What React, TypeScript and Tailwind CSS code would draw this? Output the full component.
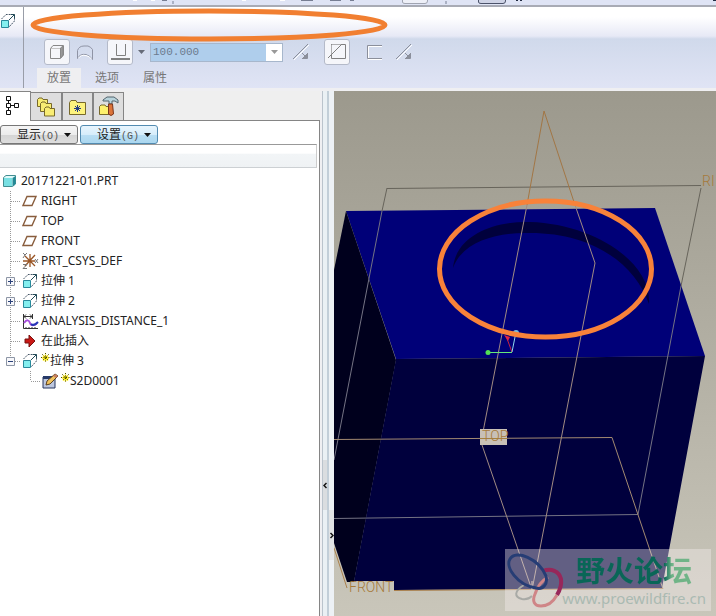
import type { ReactNode } from "react";

const uiFont = "font-['Noto_Sans','Noto_Sans_CJK_SC',sans-serif]";

function SolidIcon() {
  return (
    <svg width="16" height="16" fill="none" stroke="#888" aria-hidden="true">
      <path d="M1.500 4.500 L4 1.500 H14.500 V11 L11.500 14.500 H1.500 Z" />
      <path d="M2 4.500 H11.500" stroke="#c4c4c4" />
      <path d="M11.500 4 L14 2 V11 L11.500 14 Z" fill="#999" />
    </svg>
  );
}

function SurfaceIcon() {
  return (
    <svg width="18" height="17" fill="none" stroke="#8f94a5" aria-hidden="true">
      <path d="M1.500 14.500 V6.500 Q3 2 8 2 H12 Q15 3 16.500 5.500 V15.500 Q14 11.500 10 10.500 Q4 9.500 1.500 14.500 Z" />
      <path d="M2.500 14 Q5 10.500 10 11.500 Q14 12.500 15.500 15" stroke="#fff" />
    </svg>
  );
}

function DepthIcon() {
  return (
    <svg width="21" height="18" fill="none" stroke="#808080" aria-hidden="true">
      <path d="M6.500 1 V12.500 H15.500 V1" />
      <path d="M1 16 H20" strokeWidth="2" />
    </svg>
  );
}

function FlipIcon() {
  return (
    <svg width="18" height="18" fill="none" stroke="#8b8f9b" aria-hidden="true">
      <path d="M2 17 L17 2" stroke="#fff" />
      <path d="M1 16 L16 1 M10 10 L15 15 M15.500 10 V15.500 H10" />
      <path d="M15 11 V15 H11 Z" fill="#8b8f9b" />
    </svg>
  );
}

function CutIcon() {
  return (
    <svg width="20" height="18" fill="none" stroke="#808080" aria-hidden="true">
      <path d="M14 1.500 H18.500 V15.500 H4.500 V11" />
      <path d="M4.500 1.500 V12 M4.500 1.500 H14" strokeDasharray="1 1" stroke="#666" />
      <path d="M1 15 L15 1" />
    </svg>
  );
}

function ThickenIcon() {
  return (
    <svg width="17" height="17" fill="none" stroke="#8b8f9b" aria-hidden="true">
      <path d="M16 2.500 H2.500 V14" stroke="#fff" />
      <path d="M16 1.500 H1.500 V14.500 H16" />
      <path d="M2 15.500 H16" stroke="#fff" />
    </svg>
  );
}

function ExtrudeIcon() {
  return (
    <svg width="16" height="16" fill="none" aria-hidden="true">
      <path d="M1.500 6 L6 1.500 H14.500 V8 L9 14" stroke="#456" strokeDasharray="2 1" />
      <path d="M9 7 L14 2 M11 1.500 H14.500 V5" stroke="#234b58" />
      <path d="M1.500 7.500 H8.500 V14.500 H1.500 Z" fill="#84efef" stroke="#28899b" />
    </svg>
  );
}

function PartIcon() {
  return (
    <svg width="15" height="14" aria-hidden="true">
      <path d="M1.500 3.500 L4 1.500 H13.500 V10 L10.500 12.500 H1.500 Z" fill="#dffafa" stroke="#438d91" />
      <path d="M2 4 H10 V12 H2 Z" fill="#79e0e3" />
      <path d="M10.500 4 L13.500 2 V10 L10.500 12.500 Z" fill="#238a96" />
    </svg>
  );
}

function PlaneIcon() {
  return (
    <svg width="16" height="14" fill="none" stroke="#895d3d" aria-hidden="true">
      <path d="M5 2.500 H14 L10 11.500 H1 Z" strokeWidth="1.400" />
    </svg>
  );
}

function CsysIcon() {
  return (
    <svg width="18" height="18" fill="none" aria-hidden="true">
      <path d="M8 2 V15 M1 9 H13 M3 4 L13 14 M13 3 L3 14" stroke="#9a5524" strokeWidth="1.300" />
      <path d="M1 1 L3 3 L5 1 M3 3 L1 6 M1 12.500 H5 L1 16.500 H5 M13 7 L16 11 M16 7 L13 11" stroke="#777" />
    </svg>
  );
}

function AnalysisIcon() {
  return (
    <svg width="17" height="17" fill="none" aria-hidden="true">
      <path d="M1.500 1 V15.500 H16 M10.500 1 V6 M2 3.500 H10 M4 1.500 L2 3.500 L4 5.500 M8 1.500 L10 3.500 L8 5.500" stroke="#333" />
      <path d="M4 14 V15 M7 14 V15 M10 14 V15 M13 14 V15" stroke="#333" />
      <path d="M2 10 C5 6 7 7 8 10 S12 13 15 10" stroke="#a54cdb" strokeWidth="2" />
      <path d="M9 11 Q12 13.500 16 9" stroke="#2537b6" strokeWidth="2" />
    </svg>
  );
}

function InsertIcon() {
  return (
    <svg width="16" height="14" aria-hidden="true">
      <path d="M3 5 H7 V1 L13 7 L7 13 V9 H3 Z" fill="#c91815" stroke="#761311" />
    </svg>
  );
}

function SketchIcon() {
  return (
    <svg width="17" height="17" aria-hidden="true">
      <path d="M1 4 H13 V15 H1 Z" fill="#bdc7df" stroke="#27375f" />
      <path d="M1 3 H12 V6 H1 Z" fill="#263968" />
      <path d="M4 12 L5 8 L13 1 L16 3 L8 11 Z" fill="#f0c25e" stroke="#59401d" />
      <path d="M13 1 L16 3 L14 5 L11 3 Z" fill="#c77e62" />
    </svg>
  );
}

function NewMark() {
  return (
    <svg width="9" height="20" className="shrink-0" aria-hidden="true">
      <path d="M4.500 3.500 V10.500 M1 7 H8 M2 4.500 L7 9.500 M7 4.500 L2 9.500" stroke="#ffee24" strokeWidth="1.500" />
      <path d="M4.500 2 V12 M0 6.500 H9 M1 3 L8 10 M8 3 L1 10" stroke="#4b4b00" strokeDasharray="1 1.500" />
    </svg>
  );
}

function StructureIcon() {
  return (
    <svg width="15" height="20" fill="#fff" stroke="#111" aria-hidden="true">
      <path d="M3.500 5 V15 M5 9.500 H10" fill="none" />
      <path d="M1.500 .5 H5.500 V4.500 H1.500 Z M1.500 7.500 H5.500 V11.500 H1.500 Z M1.500 14.500 H5.500 V18.500 H1.500 Z M9.500 7.500 H13.500 V11.500 H9.500 Z" />
    </svg>
  );
}

function FoldersIcon() {
  return (
    <svg width="20" height="20" fill="#f9ed73" stroke="#77692b" aria-hidden="true">
      <path d="M1.500 9.500 V2.500 L3 1 H6 L7 2.500 H11.500 V9.500 Z" />
      <path d="M4.500 14.500 V6.500 L6 5 H9 L10 6.500 H15.500 V14.500 Z" />
      <path d="M8.500 19 V11.500 L10 10 H13 L14 11.500 H18.500 V19 Z" />
    </svg>
  );
}

function FavoritesIcon() {
  return (
    <svg width="19" height="18" aria-hidden="true">
      <path d="M1.500 16.500 V4.500 L3 2.500 H8 L9 4.500 H17.500 V16.500 Z" fill="#fdf37e" stroke="#77692b" />
      <path d="M9.500 7 V14 M6 10.500 H13 M7 8 L12 13 M12 8 L7 13" stroke="#233c81" />
    </svg>
  );
}

function ToolsIcon() {
  return (
    <svg width="21" height="21" aria-hidden="true">
      <path d="M1.500 18.500 V10.500 L3 9 H7 L8 10.500 H13.500 V18.500 Z" fill="#fdf06c" stroke="#77692b" />
      <path d="M5 4 L9 1 H16 L20 4 V7 L17 5 H14 V8 H11 V5 H5 Z" fill="#b8d3db" stroke="#52646d" />
      <path d="M10.500 8 H14.500 L15.500 18 Q13 21 10.500 18 Z" fill="#dc7439" stroke="#7a351a" />
    </svg>
  );
}

function Connector({ last = false, sign = "" }: { last?: boolean; sign?: string }) {
  return (
    <svg width="22" height="20" fill="none" className="block" aria-hidden="true">
      <path d={last ? "M10.500 0 V10 M11 10.500 H21" : "M10.500 0 V20 M11 10.500 H21"} stroke="#999" strokeDasharray="1 1" />
      {sign && <path d="M6.500 6.500 H14.500 V14.500 H6.500 Z" fill="#f7f7fa" stroke="#8c95a5" />}
      {sign && <path d={sign === "+" ? "M8 10.500 H13 M10.500 8 V13" : "M8 10.500 H13"} stroke="#294179" />}
    </svg>
  );
}

type Item = { label: string; icon: ReactNode; sign?: string; fresh?: boolean; last?: boolean };

const items: Item[] = [
  { label: "RIGHT", icon: <PlaneIcon /> },
  { label: "TOP", icon: <PlaneIcon /> },
  { label: "FRONT", icon: <PlaneIcon /> },
  { label: "PRT_CSYS_DEF", icon: <CsysIcon /> },
  { label: "拉伸 1", icon: <ExtrudeIcon />, sign: "+" },
  { label: "拉伸 2", icon: <ExtrudeIcon />, sign: "+" },
  { label: "ANALYSIS_DISTANCE_1", icon: <AnalysisIcon /> },
  { label: "在此插入", icon: <InsertIcon /> },
  { label: "拉伸 3", icon: <ExtrudeIcon />, sign: "-", fresh: true, last: true },
];

function TreeRow({ item }: { item: Item }) {
  return (
    <div className="flex h-5 items-center">
      {item.sign ? (
        <button aria-label={(item.sign === "+" ? "展开 " : "折叠 ") + item.label}>
          <Connector sign={item.sign} last={item.last} />
        </button>
      ) : (
        <Connector last={item.last} />
      )}
      <span className="flex w-[19px] shrink-0">{item.icon}</span>
      {item.fresh && <NewMark />}
      <span>{item.label}</span>
    </div>
  );
}

function ModelTree() {
  return (
    <ul className="pt-[3px] text-[12px] leading-5 whitespace-nowrap text-[#222]">
      <li>
        <div className="flex h-5 items-center pl-0.5">
          <span className="w-[19px]"><PartIcon /></span>
          <span>20171221-01.PRT</span>
        </div>
        <ul>
          {items.map((item) => (
            <li key={item.label}>
              <TreeRow item={item} />
              {item.last && (
                <ul className="pl-5">
                  <li><TreeRow item={{ label: "S2D0001", icon: <SketchIcon />, fresh: true, last: true }} /></li>
                </ul>
              )}
            </li>
          ))}
        </ul>
      </li>
    </ul>
  );
}

const frameButton = "flex size-[26px] shrink-0 items-center justify-center rounded-[3px] border border-[#b4bac9] bg-[#f5f6fa]";

function Dashboard() {
  return (
    <section className="relative flex h-[81px] shrink-0 bg-[linear-gradient(#fff_0px,#fff_10px,#e7e9f6_29px,#d0d9eb_32px,#e0e4f5_81px)]">
      <div className="w-6 shrink-0 border-r border-[#999da8] pt-[6px]"><ExtrudeIcon /></div>
      <div className="flex flex-1 flex-col pt-8 pl-[13px]">
        <div className="flex h-[26px] items-center pl-[7px]">
          <button className={frameButton} aria-label="实体"><SolidIcon /></button>
          <button className="ml-1.5 shrink-0" aria-label="曲面"><SurfaceIcon /></button>
          <button className={frameButton + " ml-[13px]"} aria-label="深度"><DepthIcon /></button>
          <button className="mx-1 shrink-0" aria-label="深度选项">
            <svg width="9" height="6"><path d="M1 1 H8 L4.500 5 Z" fill="#666b78" /></svg>
          </button>
          <div className="flex h-[19px] w-[133px] shrink-0 border border-[#a7b7cc] bg-white">
            <input aria-label="深度值" defaultValue="100.000" className="w-[115px] bg-[#afceec] pl-0.5 font-['Liberation_Mono',monospace] text-[11px] text-[#6c7b8e]" />
            <button className="flex flex-1 items-center justify-center" aria-label="最近的值">
              <svg width="9" height="6"><path d="M1 1 H8 L4.500 5 Z" fill="#999" /></svg>
            </button>
          </div>
          <button className="ml-[9px] shrink-0" aria-label="反向"><FlipIcon /></button>
          <button className={frameButton + " ml-[14px]"} aria-label="去除材料"><CutIcon /></button>
          <button className="ml-4 shrink-0" aria-label="加厚"><ThickenIcon /></button>
          <button className="ml-3 shrink-0" aria-label="反向厚度"><FlipIcon /></button>
        </div>
        <nav className="mt-[3px] flex h-5 gap-1 text-[12px] leading-5 text-[#777]">
          <button className="w-11 bg-[#efeff1]">放置</button>
          <button className="w-11">选项</button>
          <button className="w-11">属性</button>
        </nav>
      </div>
      <svg className="pointer-events-none absolute top-0 left-[30px]" width="360" height="38" fill="none" aria-hidden="true">
        <ellipse cx="179" cy="18" rx="176" ry="14" stroke="#f17f31" strokeWidth="5" />
      </svg>
    </section>
  );
}

function Viewport() {
  return (
    <main className="relative min-w-0 flex-1 overflow-hidden">
      <svg className="absolute inset-0 size-full" viewBox="334 91 382 525" preserveAspectRatio="xMinYMin slice" role="img" aria-label="三维模型">
        <defs>
          <linearGradient id="sky" x1="0" y1="0" x2="0" y2="1">
            <stop stopColor="#9c998d" />
            <stop offset="1" stopColor="#c9c6ba" />
          </linearGradient>
        </defs>
        <rect x="334" y="91" width="382" height="525" fill="url(#sky)" />
        <path d="M346 211 L655 208 L705 356 L396 359 Z" fill="#000078" />
        <path d="M346 211 L396 360 L354 582 H347 L334 543 V270 Z" fill="#00001d" />
        <path d="M396 359 L705 356 L662 588 L394 590 V581 H354 Z" fill="#00003d" />
        <path d="M453 268 C456 235 495 221 530 222 C594 224 652 262 649 304 C636 266 595 233 530 233 C500 232 463 240 453 268 Z" fill="#00003c" />
        <g fill="none" strokeWidth="1">
          <path d="M387 188.500 L701 185.500 M387 188 L382 211 M701 188 L681 286" stroke="#67645b" />
          <path d="M382 211 L334 460 M681 286 L638 514.500 L334 518.500" stroke="#747384" />
          <path d="M544 111 L527 205 M544 111 L575 205" stroke="#a27645" />
          <path d="M527 205 L482 437 M575 205 L595 263 L532 590 L482 445" stroke="#a18b83" />
          <path d="M334 439.500 L612 437.500 L663 589" stroke="#a38a72" />
          <path d="M334 548 L347 588 M394 590.500 L663 588.500" stroke="#a97f4c" />
          <path d="M532 581 V590" stroke="#d6b7a7" />
          <path d="M488 352.500 H512" stroke="#65e77a" />
          <path d="M512 352 L506 336" stroke="#c72043" />
          <path d="M512 352 L516 332" stroke="#8fd8ef" />
        </g>
        <circle cx="488" cy="352.500" r="2.500" fill="#52df54" />
        <path d="M504 335 L510 337 L508 341 Z" fill="#df2442" />
        <circle cx="516" cy="333" r="3" fill="#75bfe0" />
        <rect x="480" y="429" width="27" height="16" fill="#c8c0b6" />
        <path d="M480 438.500 H507" stroke="#a68140" />
        <g className="font-['Roboto',sans-serif] text-[14px] font-light" fill="#a67a3a">
          <text x="482" y="441">TOP</text>
          <text x="349" y="592">FRONT</text>
          <text x="702" y="186">RI</text>
        </g>
        <ellipse cx="545.500" cy="269" rx="106" ry="68" fill="none" stroke="#f8823a" strokeWidth="5" />
      </svg>
      <div className="absolute right-[5px] bottom-[5px] flex h-[62px] w-[206px] bg-[#f5eded]/40">
        <svg className="absolute inset-0" width="70" height="62" fill="none" aria-hidden="true">
          <path d="M19 36 C9 42 9 48 17 50 C22 51 25 49 27 47" stroke="#a8aaa6" strokeWidth="2" />
          <path d="M38 22 C46 19 54 22 56 30 C57 37 55 41 52 46" stroke="#97275a" strokeWidth="4" />
          <path d="M52 46 C47 55 42 57 36 57 C29 57 27 52 30 45 C33 35 38 31 43 28" stroke="#cf8587" strokeWidth="3" />
          <path d="M31 39 C12 36 0 18 5 10 C11 0 34 10 41 27 C43 35 38 41 31 39" stroke="#263d75" strokeWidth="3" />
        </svg>
        <div className="relative flex flex-1 flex-col items-end pr-[5px] whitespace-nowrap">
          <span className="bg-[linear-gradient(90deg,#096657_0px,#096657_88px,#70b487_96px)] bg-clip-text pr-[14px] font-['Noto_Sans_CJK_SC',sans-serif] text-[29px] leading-[40px] font-bold text-transparent">野火论坛</span>
          <span className="text-[15px] leading-[18px] text-[#aabab2]">www.proewildfire.cn</span>
        </div>
      </div>
    </main>
  );
}

function Splitter() {
  return (
    <div className="flex w-[14px] shrink-0 pl-[2px]">
      <div className="flex w-[5px] flex-col border-l border-[#bac3cc] bg-[#eaf0f4]">
        <div className="h-[369px]" />
        <button className="flex h-[50px] items-center bg-[#dadde0]" aria-label="收起导航区">
          <svg width="4" height="7" fill="none"><path d="M3.500 1 L1 3.500 L3.500 6" stroke="#111" strokeWidth="1.500" /></svg>
        </button>
      </div>
      <div className="flex w-[7px] flex-col border-l-2 border-[#c2ced8] bg-[#edf1f5]">
        <div className="h-[419px]" />
        <button className="flex h-[50px] items-center bg-[#e1e3e5]" aria-label="展开浏览器">
          <svg width="5" height="7" fill="none"><path d="M1.500 1 L4 3.500 L1.500 6" stroke="#111" strokeWidth="1.500" /></svg>
        </button>
      </div>
    </div>
  );
}

const menuButton = "flex h-[19px] w-[78px] items-center justify-end gap-1 rounded-[3px] border pr-[5px] text-[12px] text-[#222]";
const folderTab = "flex h-[28px] w-[31px] items-center justify-center border border-b-0 border-[#858585] bg-[#dedede]";

function Navigator() {
  return (
    <aside className="flex w-[320px] shrink-0 flex-col bg-[#efefef]">
      <div className="flex h-[29px] items-end">
        <button className="z-10 -mb-px flex h-[30px] w-[31px] items-start border-t border-r border-[#858585] bg-white pt-1 pl-[5px]" aria-label="模型树"><StructureIcon /></button>
        <button className={folderTab + " border-l-0"} aria-label="文件夹浏览器"><FoldersIcon /></button>
        <button className={folderTab} aria-label="收藏夹"><FavoritesIcon /></button>
        <button className={folderTab} aria-label="连接"><ToolsIcon /></button>
      </div>
      <div className="flex-1 border-t border-r border-[#858585] bg-white pt-1">
        <div className="flex gap-0.5">
          <button className={menuButton + " border-[#777] bg-[linear-gradient(#f5f5f5_0%,#ececec_50%,#d4d4d4_51%,#dedede_100%)]"}>
            <span>显示<span className="font-['Liberation_Mono',monospace] text-[10px] text-[#555]">(O)</span></span>
            <svg width="9" height="6"><path d="M1 1 H8 L4.500 5 Z" fill="#111" /></svg>
          </button>
          <button className={menuButton + " border-[#528bb1] bg-[linear-gradient(#e8f5fd_0%,#d6edfb_50%,#b9def4_51%,#abd7ef_100%)]"}>
            <span>设置<span className="font-['Liberation_Mono',monospace] text-[10px] text-[#555]">(G)</span></span>
            <svg width="9" height="6"><path d="M1 1 H8 L4.500 5 Z" fill="#111" /></svg>
          </button>
        </div>
        <div className="mr-[2px] h-6 border border-l-0 border-t-[#999] border-r-[#ccc] border-b-[#ccd0d3] bg-[linear-gradient(#fff_0%,#fff_38%,#f2f5f7_40%,#eff2f4_100%)]" />
        <ModelTree />
      </div>
    </aside>
  );
}

export default function App() {
  return (
    <div className={"flex h-screen flex-col overflow-hidden bg-[#efeff2] " + uiFont}>
      <header className="h-[7px] shrink-0 border-b-2 border-[#a8abb5] bg-[#dfe4f5]">
        <svg width="716" height="5" className="block" fill="none" aria-hidden="true">
          <path d="M133 0 H137 M151 0 H155 M242 0 H246 M280 0 H285" stroke="#fff" strokeWidth="2" />
          <path d="M301 .5 H313 M330 .5 H341 M350 .5 H354 M162 .5 H167 M173 1 V4 M446 1 V4" stroke="#777e93" />
          <path d="M402.500 0 V2 Q402.500 3.500 405 3.500 H425 Q427.500 3.500 427.500 1 V0" fill="#eef0f8" stroke="#a0a4b1" />
          <path d="M478.500 0 V2 Q478.500 3.500 481 3.500 H503 Q505.500 3.500 505.500 1 V0" fill="#cfd4e6" stroke="#4b5269" />
          <path d="M516 .5 H518 M520 .5 H522 M713 .5 H716" stroke="#222b42" />
        </svg>
      </header>
      <Dashboard />
      <div className="mt-[3px] flex min-h-0 flex-1">
        <Navigator />
        <Splitter />
        <Viewport />
      </div>
    </div>
  );
}
